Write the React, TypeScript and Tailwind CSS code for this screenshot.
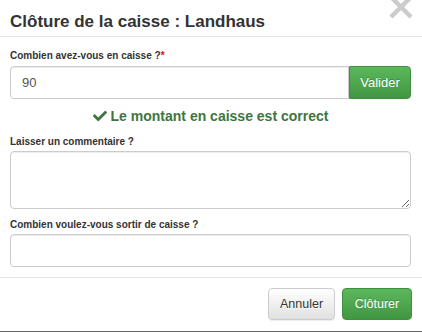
import React from "react";
import { FaCheck } from "react-icons/fa";

export default function App() {
  const font = { fontFamily: '"Liberation Sans", Arial, Helvetica, sans-serif' };
  return (
    <div className="w-[422px] h-[332px] bg-white text-[#333] text-[13px] relative overflow-hidden" style={font}>
      <div className="h-[37px] border-b border-[#e5e5e5] pl-[10px] pt-[10px]">
        <h4 className="text-[17px] font-bold leading-[24px] text-[#333] m-0">Clôture de la caisse : Landhaus</h4>
      </div>
      <svg className="absolute left-[388px] top-[-5px]" width="26" height="26" viewBox="0 0 26 26">
        <path d="M3 2 L23 22 M23 2 L3 22" stroke="#cccccc" strokeWidth="4.5" />
      </svg>
      <div className="pl-[10px] pr-[11px] pt-[11px] pb-[10px] flex flex-col">
        <label className="text-[10px] font-bold leading-[15px] mb-[3px] block">
          Combien avez-vous en caisse ?<span className="text-[#e00]">*</span>
        </label>
        <div className="flex h-[33px]">
          <input
            className="flex-1 min-w-0 h-full border border-[#ccc] rounded-l-[4px] px-[11px] text-[13px] text-[#555] outline-none shadow-[inset_0_1px_1px_rgba(0,0,0,0.075)]"
            defaultValue="90"
            style={font}
          />
          <button
            className="w-[62px] h-full rounded-r-[4px] border border-[#3e8f3e] text-white text-[13px] bg-[linear-gradient(to_bottom,#5cb85c,#419641)] [text-shadow:0_-1px_0_rgba(0,0,0,0.2)]"
            style={font}
          >
            Valider
          </button>
        </div>
        <div className="mt-[7px] h-[20px] flex items-center justify-center gap-[4px] text-[#3c763d] font-bold text-[14px] leading-[20px]">
          <FaCheck size={14} />
          <span>Le montant en caisse est correct</span>
        </div>
        <label className="mt-[8px] text-[10px] font-bold leading-[15px] mb-[2px] block">Laisser un commentaire ?</label>
        <textarea
          className="h-[58px] border border-[#ccc] rounded-[4px] px-[11px] py-[6px] outline-none shadow-[inset_0_1px_1px_rgba(0,0,0,0.075)]"
          style={font}
        />
        <label className="mt-[8px] text-[10px] font-bold leading-[15px] mb-[2px] block">Combien voulez-vous sortir de caisse ?</label>
        <input
          className="h-[33px] border border-[#ccc] rounded-[4px] px-[11px] outline-none shadow-[inset_0_1px_1px_rgba(0,0,0,0.075)]"
          style={font}
        />
      </div>
      <div className="border-t border-[#e5e5e5] border-b border-b-[#666] pt-[10px] pb-[11px] pr-[10px] flex justify-end gap-[7px]">
        <button
          className="w-[67px] h-[32px] rounded-[4px] border border-[#ccc] text-[#333] text-[12.5px] bg-[linear-gradient(to_bottom,#fff,#e0e0e0)] [text-shadow:0_1px_0_#fff] shadow-[0_1px_1px_rgba(0,0,0,0.075)]"
          style={font}
        >
          Annuler
        </button>
        <button
          className="w-[70px] h-[32px] rounded-[4px] border border-[#3e8f3e] text-white text-[12.5px] bg-[linear-gradient(to_bottom,#5cb85c,#419641)] [text-shadow:0_-1px_0_rgba(0,0,0,0.2)]"
          style={font}
        >
          Clôturer
        </button>
      </div>
    </div>
  );
}
